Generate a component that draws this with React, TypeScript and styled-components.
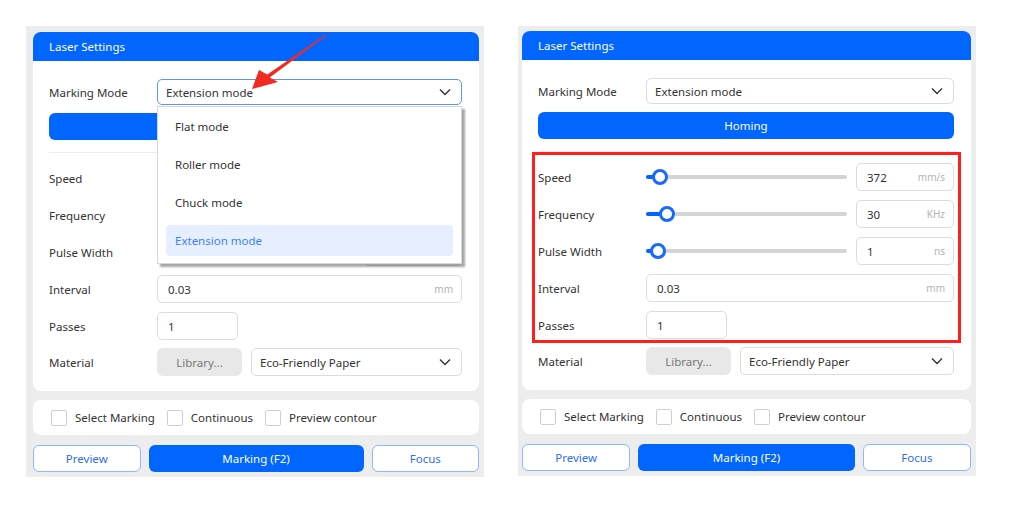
import React from 'react';
import styled, { createGlobalStyle } from 'styled-components';

const GlobalStyle = createGlobalStyle`
  * { box-sizing: border-box; }
  html, body { margin: 0; padding: 0; background: #ffffff; }
  body {
    font-family: "Noto Sans", "Open Sans", Arial, sans-serif;
    font-size: 11.5px;
    color: #333333;
  }
`;

const BLUE = '#0066ff';

const Page = styled.div`
  position: relative;
  display: flex;
  align-items: flex-start;
  gap: 34px;
  padding: 26px 0 0 26px;
  height: 515px;
`;

const Panel = styled.div<{ $padLeft: number; $padTop: number }>`
  width: 458px;
  background: #ededed;
  padding: ${(p) => p.$padTop}px 5px 5px ${(p) => p.$padLeft}px;
  display: flex;
  flex-direction: column;
`;

const Card = styled.section`
  background: #ffffff;
  border-radius: 8px;
`;

const CardHeader = styled.header`
  height: 29px;
  background: ${BLUE};
  color: #ffffff;
  border-radius: 8px 8px 0 0;
  padding-left: 16px;
  display: flex;
  align-items: center;
`;

const CardBody = styled.div`
  padding: 18px 17px 15px 16px;
  display: flex;
  flex-direction: column;
`;

const Row = styled.div<{ $h?: number }>`
  display: grid;
  grid-template-columns: 108px 1fr;
  align-items: center;
  height: ${(p) => p.$h ?? 28}px;
`;

const MaterialRow = styled(Row)`
  margin-top: 8px;
`;

const Label = styled.span`
  color: #333;
`;

const SelectWrap = styled.div`
  position: relative;
  height: 100%;
`;

const SelectBox = styled.div<{ $focus?: boolean }>`
  height: 100%;
  border: 1px solid ${(p) => (p.$focus ? '#5b93ff' : '#dcdcdc')};
  border-radius: 5px;
  padding: 0 10px 0 8px;
  display: flex;
  align-items: center;
  justify-content: space-between;
  background: #fff;
  color: #333;
`;

const Menu = styled.ul`
  position: absolute;
  z-index: 5;
  top: calc(100% + 1px);
  left: 0;
  right: 0;
  margin: 0;
  list-style: none;
  background: #fff;
  border: 1px solid #d6d6d6;
  box-shadow: 3px 3px 2px rgba(0, 0, 0, 0.35);
  padding: 4px 8px 7px 8px;
  display: flex;
  flex-direction: column;
  gap: 7px;
`;

const MenuItem = styled.li<{ $active?: boolean }>`
  height: 31px;
  border-radius: 4px;
  padding-left: 9px;
  display: flex;
  align-items: center;
  background: ${(p) => (p.$active ? '#e6efff' : 'transparent')};
  color: ${(p) => (p.$active ? '#3f7ff5' : '#333')};
`;

const PrimaryBar = styled.button`
  margin-top: 8px;
  height: 27px;
  border: none;
  border-radius: 6px;
  background: ${BLUE};
  color: #fff;
  font: inherit;
`;

const Divider = styled.hr`
  border: none;
  border-top: 1px solid #ececec;
  margin: 12px 0 11px 0;
`;

const Params = styled.div`
  position: relative;
  display: flex;
  flex-direction: column;
  gap: 9px;
`;

const Highlight = styled.div`
  position: absolute;
  top: -11px;
  left: -6px;
  right: -7px;
  bottom: -4px;
  border: 3px solid #ff1f1f;
  pointer-events: none;
`;

const SliderCell = styled.div`
  display: grid;
  grid-template-columns: 1fr 98px;
  gap: 9px;
  align-items: center;
  height: 100%;
`;

const Track = styled.div`
  position: relative;
  height: 16px;
  &::before {
    content: '';
    position: absolute;
    left: 0;
    right: 0;
    top: 6px;
    height: 4px;
    border-radius: 2px;
    background: #d4d4d4;
  }
`;

const Fill = styled.div`
  position: absolute;
  left: 0;
  top: 6px;
  height: 4px;
  border-radius: 2px;
  background: ${BLUE};
`;

const Thumb = styled.div`
  position: absolute;
  top: 0;
  width: 16px;
  height: 16px;
  border-radius: 50%;
  border: 3px solid #1769ff;
  background: #fff;
`;

const InputBox = styled.div<{ $w?: number }>`
  height: 100%;
  width: ${(p) => (p.$w ? `${p.$w}px` : '100%')};
  border: 1px solid #dcdcdc;
  border-radius: 5px;
  padding: 0 8px 0 10px;
  display: flex;
  align-items: center;
  justify-content: space-between;
  color: #333;
`;

const Unit = styled.span`
  font-size: 10px;
  color: #b4b4b4;
`;

const MaterialCell = styled.div`
  display: grid;
  grid-template-columns: 85px 1fr;
  gap: 9px;
  height: 100%;
`;

const GrayButton = styled.button`
  border: none;
  border-radius: 6px;
  background: #e8e8e8;
  color: #777;
  font: inherit;
`;

const OptionsCard = styled.div`
  margin-top: 9px;
  height: 35px;
  background: #fff;
  border-radius: 8px;
  padding-left: 18px;
  display: flex;
  align-items: center;
  gap: 12px;
`;

const Check = styled.label`
  display: flex;
  align-items: center;
  gap: 8px;
  color: #333;
  &::before {
    content: '';
    width: 14px;
    height: 14px;
    border: 1px solid #cfcfcf;
    border-radius: 2px;
    background: #fff;
  }
`;

const ActionRow = styled.div`
  margin-top: 10px;
  display: grid;
  grid-template-columns: 1fr 2fr 1fr;
  gap: 8px;
  height: 27px;
`;

const ActionButton = styled.button<{ $primary?: boolean }>`
  border-radius: 6px;
  font: inherit;
  border: ${(p) => (p.$primary ? 'none' : '1.5px solid #8fb6ff')};
  background: ${(p) => (p.$primary ? BLUE : '#fff')};
  color: ${(p) => (p.$primary ? '#fff' : '#2f6df2')};
`;

const Arrow = styled.svg`
  position: absolute;
  left: 240px;
  top: 28px;
  z-index: 10;
`;

const Chevron = () => (
  <svg width="12" height="8" viewBox="0 0 12 8">
    <polyline points="1,1.5 6,6.5 11,1.5" fill="none" stroke="#333" strokeWidth="1.4" />
  </svg>
);

const sliders = [
  { label: 'Speed', value: '372', unit: 'mm/s', f: 0.034 },
  { label: 'Frequency', value: '30', unit: 'KHz', f: 0.068 },
  { label: 'Pulse Width', value: '1', unit: 'ns', f: 0.019 },
];

const modes = ['Flat mode', 'Roller mode', 'Chuck mode', 'Extension mode'];

type PanelProps = { menuOpen?: boolean; highlight?: boolean; padLeft: number; padTop: number };

const LaserPanel: React.FC<PanelProps> = ({ menuOpen, highlight, padLeft, padTop }) => (
  <Panel $padLeft={padLeft} $padTop={padTop}>
    <Card>
      <CardHeader>Laser Settings</CardHeader>
      <CardBody>
        <Row $h={26}>
          <Label>Marking Mode</Label>
          <SelectWrap>
            <SelectBox $focus={menuOpen}>
              <span>Extension mode</span>
              <Chevron />
            </SelectBox>
            {menuOpen && (
              <Menu>
                {modes.map((m) => (
                  <MenuItem key={m} $active={m === 'Extension mode'}>
                    {m}
                  </MenuItem>
                ))}
              </Menu>
            )}
          </SelectWrap>
        </Row>
        <PrimaryBar>Homing</PrimaryBar>
        <Divider />
        <Params>
          {sliders.map((s) => (
            <Row key={s.label}>
              <Label>{s.label}</Label>
              <SliderCell>
                <Track>
                  <Fill style={{ width: `calc(${s.f} * (100% - 16px) + 8px)` }} />
                  <Thumb style={{ left: `calc(${s.f} * (100% - 16px))` }} />
                </Track>
                <InputBox>
                  <span>{s.value}</span>
                  <Unit>{s.unit}</Unit>
                </InputBox>
              </SliderCell>
            </Row>
          ))}
          <Row>
            <Label>Interval</Label>
            <InputBox>
              <span>0.03</span>
              <Unit>mm</Unit>
            </InputBox>
          </Row>
          <Row>
            <Label>Passes</Label>
            <InputBox $w={81}>
              <span>1</span>
            </InputBox>
          </Row>
          {highlight && <Highlight />}
        </Params>
        <MaterialRow>
          <Label>Material</Label>
          <MaterialCell>
            <GrayButton>Library...</GrayButton>
            <SelectBox>
              <span>Eco-Friendly Paper</span>
              <Chevron />
            </SelectBox>
          </MaterialCell>
        </MaterialRow>
      </CardBody>
    </Card>
    <OptionsCard>
      <Check>Select Marking</Check>
      <Check>Continuous</Check>
      <Check>Preview contour</Check>
    </OptionsCard>
    <ActionRow>
      <ActionButton>Preview</ActionButton>
      <ActionButton $primary>Marking (F2)</ActionButton>
      <ActionButton>Focus</ActionButton>
    </ActionRow>
  </Panel>
);

export default function App() {
  return (
    <>
      <GlobalStyle />
      <Page>
        <LaserPanel menuOpen padLeft={7} padTop={6} />
        <LaserPanel highlight padLeft={4} padTop={5} />
        <Arrow width="100" height="70" viewBox="0 0 100 70">
          <polygon
            fill="#f22a22"
            points="12,61 19,42 27.3,46.4 85.6,6.5 86.4,7.5 29.7,49.6 38,54"
          />
        </Arrow>
      </Page>
    </>
  );
}
